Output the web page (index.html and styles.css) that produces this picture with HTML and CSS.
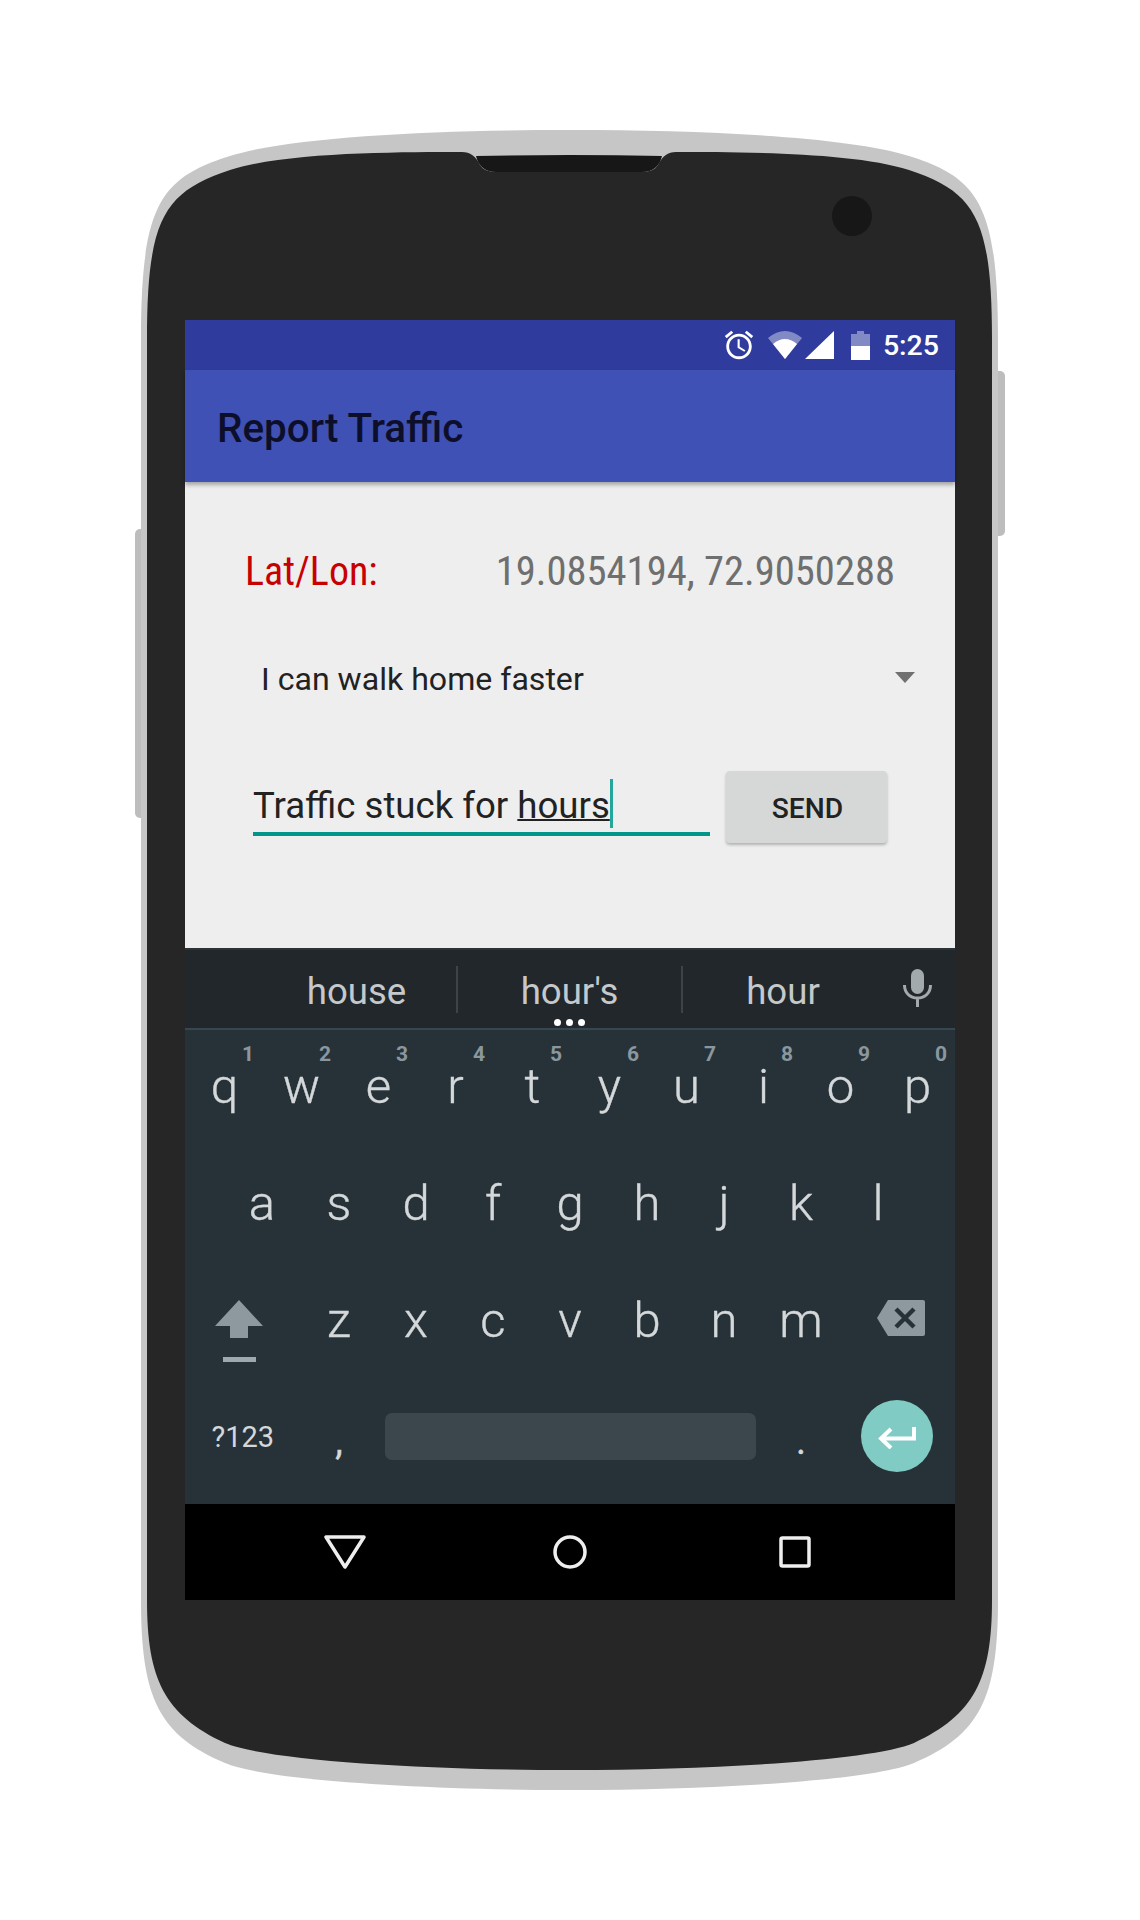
FILE: index.html
```html
<!DOCTYPE html>
<html lang="en">
<head>
  <meta charset="UTF-8">
  <title>Report Traffic</title>
  <link rel="stylesheet" href="styles.css">
</head>
<body>
  <div class="device">
    <svg class="body-shape" viewBox="0 0 1140 1920" width="1140" height="1920">
      <rect x="135" y="529" width="12" height="289" rx="5" fill="#bdbdbd"/>
      <rect x="992" y="371" width="13" height="165" rx="5" fill="#bdbdbd"/>
      <path fill="#c6c6c6" d="M141 340C141 205 160 178 230 156C290 137 430 130 570 130C708 130 849 137 909 156C979 178 998 205 998 340V1600C998 1700 979 1735 914 1763C874 1780 719 1790 570 1790C420 1790 265 1780 225 1763C160 1735 141 1700 141 1600Z"/>
      <path fill="#262626" d="M147 340C147 220 163 192 230 170C285 152 400 152 462 152Q474 152 480 165Q484 172 496 172H642Q654 172 658 165Q664 152 676 152C738 152 854 152 909 170C976 192 992 220 992 340V1600C992 1680 974 1715 914 1743C874 1760 719 1770 570 1770C420 1770 265 1760 225 1743C165 1715 147 1680 147 1600Z"/>
      <path fill="#171717" d="M476 156Q570 154 662 156Q658 172 642 172H496Q480 172 476 156Z"/>
      <circle cx="852" cy="216" r="20" fill="#171717"/>
    </svg>

    <div class="screen">
      <div class="statusbar">
        <svg class="ic-alarm" viewBox="0 0 24 24" width="34" height="34"><path fill="#fff" d="M22 5.72l-4.6-3.86-1.29 1.53 4.6 3.86L22 5.72zM7.88 3.39L6.6 1.86 2 5.71l1.29 1.53 4.59-3.85zM12.5 8H11v6l4.75 2.85.75-1.23-4-2.37V8zM12 4c-4.97 0-9 4.03-9 9s4.02 9 9 9c4.97 0 9-4.03 9-9s-4.03-9-9-9zm0 16c-3.87 0-7-3.13-7-7s3.13-7 7-7 7 3.13 7 7-3.13 7-7 7z"/></svg>
        <svg class="ic-wifi" viewBox="0 0 34 28" width="34" height="28"><path fill="#fff" fill-opacity=".4" d="M0 7Q17 -7 34 7L17 28Z"/><path fill="#fff" d="M5 13Q17 3 29 13L17 28Z"/></svg>
        <svg class="ic-signal" viewBox="0 0 29 28" width="29" height="28"><path fill="#fff" d="M0 28L29 0V28Z"/></svg>
        <svg class="ic-battery" viewBox="0 0 19 29" width="19" height="29"><path fill="#fff" fill-opacity=".4" d="M6 0H13V3H19V15H0V3H6Z"/><rect y="15" width="19" height="14" fill="#fff"/></svg>
        <span class="clock">5:25</span>
      </div>
      <div class="appbar">Report Traffic</div>

      <div class="content">
        <div class="coords">
          <span class="coords-label">Lat/Lon:</span>
          <span class="coords-value">19.0854194, 72.9050288</span>
        </div>
        <div class="spinner">
          <span>I can walk home faster</span>
          <span class="spinner-arrow"></span>
        </div>
        <div class="send-row">
          <div class="field">Traffic stuck for <span class="composing">hours</span><span class="cursor"></span></div>
          <button class="send">SEND</button>
        </div>
      </div>

      <div class="keyboard">
        <div class="suggestions">
          <span class="sug sug-first">house</span>
          <span class="sug sug-mid">hour's<span class="dots"><i></i><i></i><i></i></span></span>
          <span class="sug sug-last">hour</span>
          <svg class="ic-mic" viewBox="0 0 29 38" width="29" height="38"><rect x="8" y="0" width="13" height="25" rx="6.5" fill="#a3aaae"/><path d="M1.5 16C1.5 24 7 29 14.5 29S27.5 24 27.5 16M14.5 29V38" fill="none" stroke="#a3aaae" stroke-width="3"/></svg>
        </div>
        <div class="keys">
          <div class="row row-top">
            <span class="key">q<b>1</b></span><span class="key">w<b>2</b></span><span class="key">e<b>3</b></span><span class="key">r<b>4</b></span><span class="key">t<b>5</b></span><span class="key">y<b>6</b></span><span class="key">u<b>7</b></span><span class="key">i<b>8</b></span><span class="key">o<b>9</b></span><span class="key">p<b>0</b></span>
          </div>
          <div class="row row-home">
            <span class="key">a</span><span class="key">s</span><span class="key">d</span><span class="key">f</span><span class="key">g</span><span class="key">h</span><span class="key">j</span><span class="key">k</span><span class="key">l</span>
          </div>
          <div class="row row-shift">
            <span class="key key-wide key-shift">
              <svg viewBox="0 0 48 62" width="48" height="62"><path fill="#8d999f" d="M24 0L48 26H33V38H15V26H0Z"/><rect x="8" y="57" width="33" height="5" fill="#9fa8ad"/></svg>
            </span>
            <span class="key">z</span><span class="key">x</span><span class="key">c</span><span class="key">v</span><span class="key">b</span><span class="key">n</span><span class="key">m</span>
            <span class="key key-wide key-del">
              <svg viewBox="0 0 48 36" width="48" height="36"><path fill="#8d999f" d="M11 0H46Q48 0 48 2V34Q48 36 46 36H11L0 18Z"/><path d="M19 9L37 27M37 9L19 27" stroke="#263238" stroke-width="4.5" fill="none"/></svg>
            </span>
          </div>
          <div class="row row-bottom">
            <span class="key key-sym">?123</span>
            <span class="key key-punct">,</span>
            <span class="space"></span>
            <span class="key key-punct">.</span>
            <span class="key key-wide">
              <span class="enter">
                <svg viewBox="0 0 38 22" width="38" height="22"><path d="M36 0V11.5H3M13 2L3 11.5L13 21" fill="none" stroke="#fff" stroke-width="4"/></svg>
              </span>
            </span>
          </div>
        </div>
      </div>

      <div class="navbar">
        <svg viewBox="0 0 42 34" width="42" height="34"><path d="M2 2H40L21 32Z" fill="none" stroke="#eee" stroke-width="3.5" stroke-linejoin="round"/></svg>
        <svg viewBox="0 0 34 34" width="34" height="34"><circle cx="17" cy="17" r="15" fill="none" stroke="#eee" stroke-width="3.5"/></svg>
        <svg viewBox="0 0 32 32" width="32" height="32"><rect x="2" y="2" width="28" height="28" rx="1.5" fill="none" stroke="#eee" stroke-width="3.5"/></svg>
      </div>
    </div>
  </div>
</body>
</html>
```

FILE: styles.css
```css
* { box-sizing: border-box; }
body { margin: 0; background: #fff; font-family: Roboto, "Liberation Sans", sans-serif; }

.device { position: relative; width: 1140px; height: 1920px; padding: 320px 185px 0; }
.body-shape { position: absolute; left: 0; top: 0; }
.screen { position: relative; width: 770px; height: 1280px; display: flex; flex-direction: column; }

/* status + title */
.statusbar { height: 50px; background: #2f3c9e; display: flex; align-items: center; justify-content: flex-end; padding-right: 16px; color: #fff; }
.ic-alarm { margin-right: 12px; }
.ic-wifi { margin-right: 3px; }
.ic-signal { margin-right: 17px; }
.ic-battery { margin-right: 13px; }
.clock { font-size: 28.5px; font-weight: 500; }
.appbar { height: 112px; background: #3f51b5; color: #0d0f2a; font-size: 40.4px; font-weight: 500; line-height: 118px; padding-left: 32px; box-shadow: 0 3px 4px rgba(0,0,0,.3); position: relative; }

/* form */
.content { height: 466px; background: #eee; }
.coords { display: flex; justify-content: space-between; align-items: center; height: 62px; margin-top: 58px; padding: 0 60px; font-size: 40px; font-stretch: 87%; }
.coords-label { color: #c80000; }
.coords-value { color: #6f6f6f; font-size: 40.6px; }
.spinner { display: flex; justify-content: space-between; align-items: center; height: 76px; margin-top: 38px; padding: 2px 40px 0 76px; font-size: 32.1px; color: #222; }
.spinner-arrow { width: 0; height: 0; border-left: 10px solid transparent; border-right: 10px solid transparent; border-top: 11px solid #707070; margin-top: -4px; }
.send-row { display: flex; align-items: flex-start; gap: 16px; margin-top: 55px; padding-left: 68px; }
.field { width: 457px; height: 65px; border-bottom: 4px solid #009688; font-size: 36.6px; line-height: 56px; color: #222; padding-top: 7px; white-space: nowrap; position: relative; }
.composing { text-decoration: underline; text-decoration-thickness: 2px; }
.cursor { display: inline-block; width: 3px; height: 49px; background: #26a69a; vertical-align: -10px; }
.send { width: 161px; height: 72px; background: #d6d7d7; border: none; border-radius: 4px; box-shadow: 0 2px 3px rgba(0,0,0,.25); font-family: inherit; font-size: 28.2px; font-weight: 500; color: #222; padding: 2px 0 0 2px; }

/* keyboard */
.keyboard { height: 556px; background: #263238; border-top: 2px solid #2c3336; }
.suggestions { height: 80px; background: #21272b; border-bottom: 2px solid #37474f; display: grid; grid-template-columns: 271px 225px 202px 1fr; align-items: center; color: #c5c9cb; font-size: 36.6px; }
.sug { position: relative; text-align: center; height: 47px; line-height: 52px; }
.sug-first { padding-left: 72px; }
.sug-mid, .sug-last { border-left: 2px solid #3d4448; }
.dots { position: absolute; left: 0; right: 0; bottom: -13px; display: flex; justify-content: center; gap: 5px; }
.dots i { width: 7px; height: 7px; border-radius: 50%; background: #fff; }
.ic-mic { justify-self: center; margin: 0 3px 3px 0; }
.keys { margin-top: -2px; padding-bottom: 8px; }
.row { height: 117px; display: grid; align-items: center; justify-items: center; font-size: 49px; font-weight: 300; -webkit-text-stroke: .4px #d4d8da; color: #d4d8da; }
.row-top { grid-template-columns: repeat(10, 77px); padding-left: 1px; }
.row-home { grid-template-columns: repeat(9, 77px); padding-left: 38.5px; }
.row-shift { grid-template-columns: 115.5px repeat(7, 77px) 115.5px; }
.row-bottom { grid-template-columns: 115.5px 77px 385px 77px 115.5px; }
.key { position: relative; width: 100%; text-align: center; line-height: 117px; height: 117px; }
.key b { position: absolute; right: 9px; top: 14px; font-size: 21px; line-height: 24px; font-weight: 700; -webkit-text-stroke: 0; color: #8b979e; }
.key-wide { display: flex; align-items: center; justify-content: center; }
.key-wide svg { display: block; }
.key-shift { padding: 20px 8px 0 0; }
.key-del { padding-left: 8px; margin-top: -6px; }
.key-sym { font-size: 29px; font-weight: 400; -webkit-text-stroke: 0; }
.key-punct { font-size: 38px; font-weight: 400; line-height: 125px; }
.space { width: 371px; height: 47px; background: #3c474d; border-radius: 7px; margin-top: -2px; }
.enter { width: 72px; height: 72px; border-radius: 50%; background: #80cbc4; display: flex; align-items: center; justify-content: center; padding-top: 4px; margin-top: -3px; }

/* nav */
.navbar { height: 96px; background: #000; display: grid; grid-template-columns: repeat(3, 225px); padding-left: 47.5px; align-items: center; justify-items: center; }
```
